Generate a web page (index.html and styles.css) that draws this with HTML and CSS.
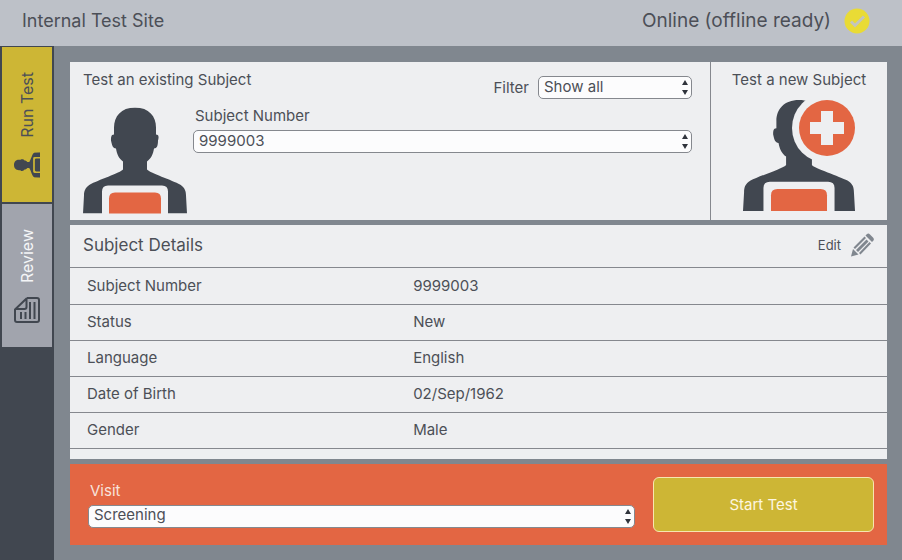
FILE: index.html
```html
<!DOCTYPE html>
<html lang="en">
<head>
<meta charset="utf-8">
<title>Internal Test Site</title>
<link rel="stylesheet" href="styles.css">
</head>
<body>
<svg class="defs" aria-hidden="true">
  <symbol id="torso" viewBox="0 0 104 106">
    <path d="M52 0C38 0 31 9 31 20V27C28 27 28 30 28 33C29 38 30 41 33 41C34 47 36 51 40 54V62C38 65 14 73 7 77C2 80 1 84 1 88L0 106H19V84Q19 78 25 78H79Q85 78 85 84V106H104L103 88C103 84 102 80 97 77C90 73 66 65 64 62V54C68 51 70 47 71 41C74 41 75 38 75 33C76 30 76 27 73 27V20C73 9 66 0 52 0Z"/>
  </symbol>
  <symbol id="arrows" viewBox="0 0 6 15">
    <path d="M3 0L6 5H0ZM3 15L0 10H6Z"/>
  </symbol>
</svg>
<header class="topbar">
  <h1 class="site">Internal Test Site</h1>
  <div class="status">
    <span>Online (offline ready)</span>
    <svg class="status-icon" viewBox="0 0 26 26" aria-hidden="true"><circle cx="13" cy="13" r="12.5"/><path d="M7 13.5L11 17.5L20 8.500"/></svg>
  </div>
</header>
<div class="body">
  <nav class="sidebar">
    <button class="tab tab-run" type="button">
      <span class="tab-label">Run Test</span>
      <svg class="tab-icon" viewBox="0 0 106 106" aria-hidden="true"><g transform="rotate(-90 53 53)"><use href="#torso" x="1" y="0" width="104" height="106"/><path d="M27 106V91Q27 85 33 85H73Q79 85 79 91V106Z"/></g></svg>
    </button>
    <button class="tab tab-review" type="button">
      <span class="tab-label">Review</span>
      <svg class="tab-icon doc" viewBox="0 0 26 26" aria-hidden="true"><path d="M13 1H23Q25 1 25 3V23Q25 25 23 25H3Q1 25 1 23V12.500L12.500 1.500V10Q12.500 12 10.500 12H1.500M7 15V22M11.500 15V22M16 5V22M20.500 5V22"/></svg>
    </button>
  </nav>
  <main class="main">
    <section class="panel subjects">
      <div class="existing">
        <div class="row">
          <h2 class="heading">Test an existing Subject</h2>
          <div class="filter">
            <label for="filter">Filter</label>
            <span class="select filter-select"><select id="filter"><option>Show all</option></select><svg class="arrows" aria-hidden="true"><use href="#arrows"/></svg></span>
          </div>
        </div>
        <div class="pick">
          <svg class="person" viewBox="0 0 104 106" aria-hidden="true"><use href="#torso" width="104" height="106"/><path class="board" d="M26 106V91Q26 85 32 85H72Q78 85 78 91V106Z"/></svg>
          <div class="field">
            <label for="subject">Subject Number</label>
            <span class="select"><select id="subject"><option>9999003</option></select><svg class="arrows" aria-hidden="true"><use href="#arrows"/></svg></span>
          </div>
        </div>
      </div>
      <button class="new" type="button">
        <span>Test a new Subject</span>
        <svg class="person-new" viewBox="0 0 112 111" aria-hidden="true"><g transform="scale(1.077 1.047)"><use href="#torso" width="104" height="106"/><path class="board" d="M26 106V91Q26 85 32 85H72Q78 85 78 91V106Z"/></g><circle class="halo" cx="84" cy="28" r="35"/><circle class="badge" cx="84" cy="28" r="28"/><path class="plus" d="M78 11H90V22H101V34H90V45H78V34H67V22H78Z"/></svg>
      </button>
    </section>
    <section class="panel details">
      <div class="details-head">
        <h2 class="details-title">Subject Details</h2>
        <button class="edit" type="button">
          <span>Edit</span>
          <svg class="pencil" viewBox="0 0 24 24" aria-hidden="true"><path d="M1 23.500L3 16L8.500 21.500ZM3.500 14.500L14.500 3.500L16 5L5 16ZM6 17L16.500 6.500L18.500 8.500L8 19ZM9 20L19.500 9L21 10.500L10.500 21.500ZM15.500 2.500L17 1Q18.500 0 20 1.500L23 4.500Q24.500 6 23.500 7.500L22 9Z"/></svg>
        </button>
      </div>
      <table class="table">
        <tbody>
          <tr><th scope="row">Subject Number</th><td>9999003</td></tr>
          <tr><th scope="row">Status</th><td>New</td></tr>
          <tr><th scope="row">Language</th><td>English</td></tr>
          <tr><th scope="row">Date of Birth</th><td>02/Sep/1962</td></tr>
          <tr><th scope="row">Gender</th><td>Male</td></tr>
        </tbody>
      </table>
    </section>
    <section class="visit">
      <div class="visit-field">
        <label for="visit">Visit</label>
        <span class="select"><select id="visit"><option>Screening</option></select><svg class="arrows" aria-hidden="true"><use href="#arrows"/></svg></span>
      </div>
      <button class="start" type="button">Start Test</button>
    </section>
  </main>
</div>
</body>
</html>
```
FILE: styles.css
```css
* { box-sizing: border-box; }
body {
  margin: 0;
  min-height: 100vh;
  display: flex;
  flex-direction: column;
  background: #80878f;
  color: #4c4f57;
  font: 15px/18px Inter, "Liberation Sans", sans-serif;
}
h1, h2 { margin: 0; font-weight: 400; }
button, select { font: inherit; color: inherit; margin: 0; }
button { cursor: pointer; border: 0; background: none; padding: 0; }
svg { display: block; flex: none; }
.defs { position: absolute; width: 0; height: 0; }

.topbar {
  display: flex;
  justify-content: space-between;
  align-items: center;
  height: 46px;
  padding: 0 32px 5px 22px;
  background: #bdc1c8;
  font-size: 19px;
  line-height: 24px;
}
.site { font-size: 18px; }
.status { display: flex; align-items: center; gap: 13px; }
.status-icon { width: 26px; height: 26px; fill: #e9db35; }
.status-icon path { fill: none; stroke: #c3c5bd; stroke-width: 3; }

.body { display: flex; flex: 1; }
.sidebar {
  display: flex;
  flex-direction: column;
  gap: 2px;
  width: 54px;
  padding: 1px 2px;
  background: #414750;
}
.tab {
  display: flex;
  flex-direction: column;
  align-items: center;
  gap: 14px;
  padding: 25px 0 24px;
}
.tab-run { background: #cdb635; }
.tab-review { background: #a1a4ad; color: #f4f5f7; }
.tab-label {
  writing-mode: vertical-rl;
  transform: rotate(180deg);
  font-size: 16px;
  line-height: 20px;
}
.tab-icon { width: 26px; height: 26px; fill: #414750; }
.doc { fill: none; stroke: #414750; stroke-width: 2; stroke-linejoin: round; }

.main {
  flex: 1;
  display: flex;
  flex-direction: column;
  gap: 5px;
  padding: 16px 15px 15px 16px;
}
.panel { background: #eeeff1; }
.subjects { display: flex; }
.existing {
  flex: 1;
  display: flex;
  flex-direction: column;
  padding: 9px 18px 6px 13px;
}
.row { display: flex; justify-content: space-between; }
.filter { display: flex; align-items: center; gap: 9px; padding-top: 5px; }
.heading { font-size: 15px; }
.filter-select { width: 154px; }
.pick { flex: 1; display: flex; align-items: flex-end; gap: 6px; }
.person { width: 104px; height: 107px; fill: #414750; }
.field { flex: 1; align-self: flex-start; display: grid; gap: 5px; padding-top: 8px; }
.field label, .visit-field label { padding-left: 2px; }
.select { display: block; position: relative; }
select {
  appearance: none;
  display: block;
  width: 100%;
  height: 23px;
  padding: 0 16px 2px 5px;
  border: 1px solid #85888e;
  border-radius: 5px;
  background: #fcfcfd;
}
.arrows {
  position: absolute;
  top: 4px;
  right: 4px;
  width: 6px;
  height: 15px;
  fill: #30343c;
  pointer-events: none;
}
.board, .badge { fill: #e36643; }
.halo, .plus { fill: #eeeff1; }
.new {
  display: flex;
  flex-direction: column;
  align-items: center;
  gap: 11px;
  width: 177px;
  padding: 9px 0;
  border-left: 1px solid #85888e;
}
.person-new { width: 112px; height: 111px; fill: #414750; }

.details { flex: 1; }
.details-head {
  display: flex;
  justify-content: space-between;
  align-items: center;
  height: 43px;
  padding: 0 13px 3px;
  border-bottom: 1px solid #85888e;
}
.details-title { font-size: 17px; line-height: 20px; }
.edit { display: flex; align-items: center; gap: 9px; font-size: 13px; }
.pencil { width: 24px; height: 24px; fill: #80878f; }
.table { width: 100%; border-collapse: collapse; table-layout: fixed; }
.table tr { border-bottom: 1px solid #85888e; }
.table th, .table td { height: 36px; padding: 0; text-align: left; font-weight: 400; }
.table th { width: 42%; padding-left: 17px; }

.visit {
  display: flex;
  align-items: center;
  gap: 18px;
  padding: 13px;
  padding-left: 18px;
  background: #e36643;
}
.visit-field { flex: 1; display: grid; gap: 5px; }
.visit-field label { color: #f8e3dc; }
.start {
  width: 221px;
  height: 55px;
  border: 1px solid #f7e6b0;
  border-radius: 6px;
  background: #cdb635;
  color: #fdf6e0;
}
```
